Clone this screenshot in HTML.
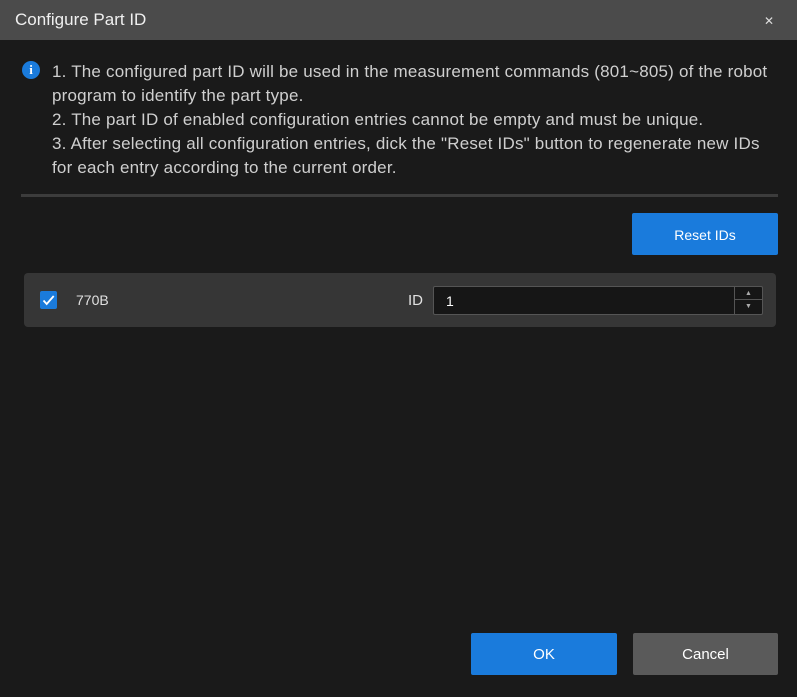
<!DOCTYPE html>
<html><head><style>
*{margin:0;padding:0;box-sizing:border-box}
body{width:797px;height:697px;background:#1a1a1a;font-family:"Liberation Sans",sans-serif;color:#dcdcdc;position:relative;overflow:hidden}
.title{position:absolute;left:0;top:0;width:797px;height:40px;background:#4b4b4b;color:#f0f0f0;font-size:17px;line-height:40px;padding-left:15px}
.x{position:absolute;right:23px;top:1px;font-size:12px;color:#ddd}
.info{position:absolute;left:22px;top:61px;width:18px;height:18px;border-radius:50%;background:#1a7bdc;color:#fff;font-size:13px;font-weight:bold;text-align:center;line-height:18px;font-family:"Liberation Serif",serif}
.txt{position:absolute;left:52px;top:60px;width:740px;font-size:17px;letter-spacing:0.2px;line-height:24px;color:#cfcfcf;white-space:nowrap}
.div{position:absolute;left:21px;top:194px;width:757px;height:3px;background:#3c3c3c}
.btn{position:absolute;height:42px;color:#fff;font-size:15px;text-align:center;line-height:44px;border-radius:2px}
.row{position:absolute;left:24px;top:273px;width:752px;height:54px;background:#363636;border-radius:4px}
.cb{position:absolute;left:40px;top:291px;width:17px;height:18px;background:#1a7bdc;border-radius:2px}
.inp{position:absolute;left:433px;top:286px;width:330px;height:29px;background:#161616;border:1px solid #555;border-radius:2px}
</style></head><body>
<div class="title">Configure Part ID<span class="x">✕</span></div>
<div class="info">i</div>
<div class="txt">1. The configured part ID will be used in the measurement commands (801~805) of the robot<br>program to identify the part type.<br>2. The part ID of enabled configuration entries cannot be empty and must be unique.<br>3. After selecting all configuration entries, dick the "Reset IDs" button to regenerate new IDs<br>for each entry according to the current order.</div>
<div class="div"></div>
<div class="btn" style="left:632px;top:213px;width:146px;background:#1a7bdc;font-size:14px">Reset IDs</div>
<div class="row"></div>
<div class="cb"><svg width="17" height="18" viewBox="0 0 17 18"><path d="M3.5 9.5l3.2 3.5 7-8" stroke="#fff" stroke-width="1.8" fill="none"/></svg></div>
<div style="position:absolute;left:76px;top:291px;font-size:14px;line-height:18px;color:#e0e0e0">770B</div>
<div style="position:absolute;left:408px;top:292px;font-size:15px;line-height:18px;color:#e0e0e0">ID</div>
<div class="inp"><span style="position:absolute;left:12px;top:6px;font-size:14px;color:#fff">1</span>
<div style="position:absolute;right:0;top:0;width:28px;height:27px;border-left:1px solid #555">
<div style="height:13px;border-bottom:1px solid #555;text-align:center;font-size:7px;line-height:13px;color:#aaa">▲</div>
<div style="height:13px;text-align:center;font-size:7px;line-height:13px;color:#aaa">▼</div></div></div>
<div class="btn" style="left:471px;top:633px;width:146px;background:#1a7bdc">OK</div>
<div class="btn" style="left:633px;top:633px;width:145px;background:#5a5a5a">Cancel</div>
</body></html>
